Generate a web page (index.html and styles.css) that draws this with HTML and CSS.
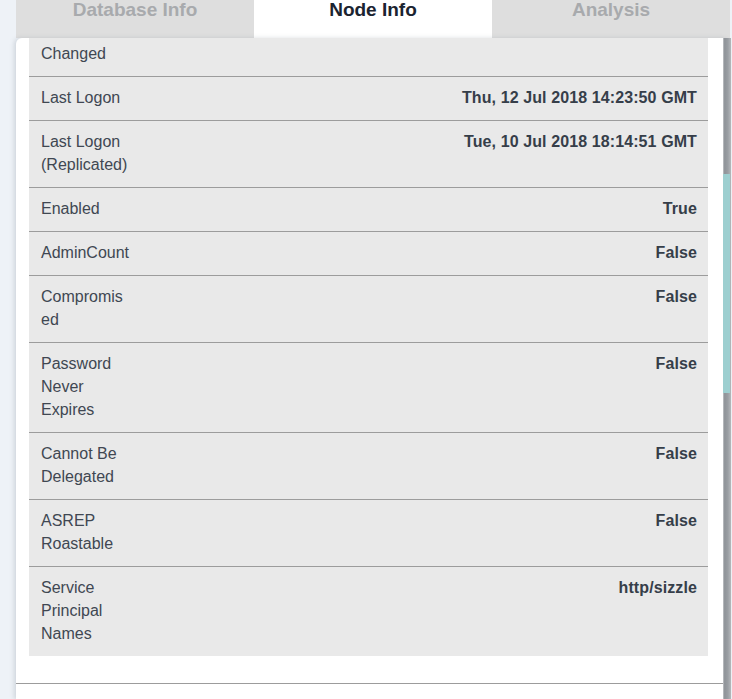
FILE: index.html
```html
<!DOCTYPE html>
<html>
<head>
<meta charset="utf-8">
<link rel="stylesheet" href="styles.css">
</head>
<body>
<div class="page">
  <div class="gutter"></div>
  <div class="main">
    <div class="tabs">
      <div class="tab">Database Info</div>
      <div class="tab active">Node Info</div>
      <div class="tab">Analysis</div>
    </div>
    <div class="card">
      <div class="section">
        <div class="props">
          <div class="row first"><div class="label">Changed</div><div class="value"></div></div>
          <div class="row"><div class="label">Last Logon</div><div class="value">Thu, 12 Jul 2018 14:23:50 GMT</div></div>
          <div class="row"><div class="label">Last Logon (Replicated)</div><div class="value">Tue, 10 Jul 2018 18:14:51 GMT</div></div>
          <div class="row"><div class="label">Enabled</div><div class="value">True</div></div>
          <div class="row"><div class="label">AdminCount</div><div class="value">False</div></div>
          <div class="row"><div class="label">Compromised</div><div class="value">False</div></div>
          <div class="row"><div class="label">Password Never Expires</div><div class="value">False</div></div>
          <div class="row"><div class="label">Cannot Be Delegated</div><div class="value">False</div></div>
          <div class="row"><div class="label">ASREP Roastable</div><div class="value">False</div></div>
          <div class="row last"><div class="label">Service Principal Names</div><div class="value">http/sizzle</div></div>
        </div>
      </div>
      <div class="footer"></div>
    </div>
  </div>
  <div class="scrollbar"><div class="thumb"></div></div>
</div>
</body>
</html>
```
FILE: styles.css
```css
html, body {
  margin: 0;
  padding: 0;
  background: #eef2f7;
  font-family: "Liberation Sans", Arial, sans-serif;
}
.page {
  display: flex;
  width: 732px;
  height: 699px;
  overflow: hidden;
  position: relative;
}
.gutter {
  width: 16px;
  flex: none;
}
.main {
  width: 714px;
  flex: none;
  display: flex;
  flex-direction: column;
}
.tabs {
  display: flex;
  height: 38px;
  flex: none;
}
.tab {
  flex: 1;
  background: #dedede;
  color: #a8aaad;
  font-weight: bold;
  font-size: 19px;
  line-height: 19px;
  text-align: center;
}
.tab.active {
  background: #ffffff;
  color: #1b2430;
}
.card {
  flex: 1;
  background: #ffffff;
  border-radius: 6px 6px 0 0;
  box-shadow: -2px 0 4px rgba(120, 130, 145, 0.25);
  overflow: hidden;
}
.section {
  padding: 0 22px 27px 13px;
}
.props {
  margin-top: -5px;
  background: #e9e9e9;
}
.row {
  display: flex;
  padding: 9px 11px 11px 12px;
  border-bottom: 1px solid #9c9c9c;
  font-size: 16px;
  line-height: 23px;
}
.row.last {
  border-bottom: none;
}
.label {
  width: 89px;
  flex: none;
  color: #404752;
  overflow-wrap: anywhere;
}
.value {
  flex: 1;
  text-align: right;
  font-weight: bold;
  color: #363e49;
  letter-spacing: 0.1px;
}
.footer {
  border-top: 1px solid #9c9c9c;
  margin-right: 7px;
}
.scrollbar {
  position: absolute;
  left: 723px;
  top: 38px;
  width: 8px;
  bottom: 0;
  background: linear-gradient(to right, #c4c6c9 0, #8f9398 20%, #9a9ea3 60%, #b5b8bb 100%);
}
.thumb {
  margin-top: 136px;
  height: 219px;
  width: 7px;
  background: #9dcfd0;
}
```
